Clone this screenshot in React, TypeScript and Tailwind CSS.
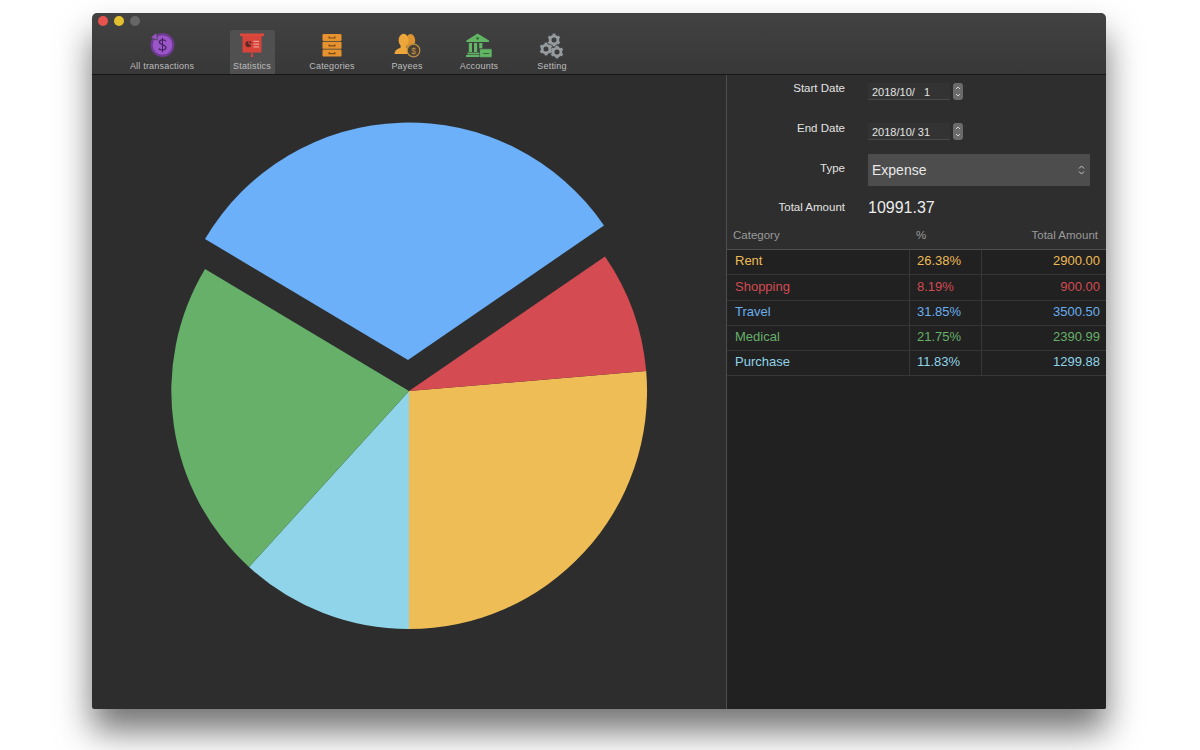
import React from 'react';

const FONT = "font-['Liberation_Sans',Arial,sans-serif]";

// toolbar icons all sit in a 28x28 box
const CoinIcon = () => (
  <svg width="28" height="28" viewBox="0 0 28 28">
    <circle cx="14.5" cy="14" r="12" fill="#6f3a92" />
    <circle cx="14.5" cy="14" r="9.8" fill="#9a55c8" />
    <path d="M2.5 6.5 L8.5 1.8 L9.4 9.2 Z" fill="#9a55c8" stroke="#3d3d3d" strokeWidth="0.7" />
    <path d="M18 10.2 C17 8.6 11.6 8.2 11.4 11 C11.2 14 18 13.4 18 16.6 C18 19.6 12 19.6 10.8 17.6" fill="none" stroke="#43215e" strokeWidth="1.2" />
    <path d="M14.5 6.8 V21.2" stroke="#43215e" strokeWidth="1" />
  </svg>
);

const BoardIcon = () => (
  <svg width="28" height="28" viewBox="0 0 28 28">
    <rect x="2" y="2.5" width="24" height="2.6" fill="#e0483c" />
    <rect x="4.5" y="5" width="19" height="16.5" fill="#d9443a" />
    <rect x="13.3" y="21.5" width="1.4" height="3" fill="#d9443a" />
    <circle cx="14" cy="25" r="1.2" fill="#d9443a" />
    <path d="M10.5 10 A3.1 3.1 0 1 0 13.4 14 L10.5 13 Z" fill="#5e2a28" />
    <path d="M11.6 9.4 L14.2 12 L11.6 12.4 Z" fill="#5e2a28" />
    <rect x="15.4" y="9.8" width="5.6" height="1.1" fill="#f0a49c" />
    <rect x="15.4" y="12.6" width="5.6" height="1.1" fill="#f0a49c" />
    <rect x="15.4" y="15.4" width="5.6" height="1.1" fill="#f0a49c" />
  </svg>
);

const DrawerIcon = () => (
  <svg width="28" height="28" viewBox="0 0 28 28">
    <rect x="4.5" y="3" width="19" height="7" rx="1.2" fill="#e5922f" />
    <rect x="4.5" y="10.8" width="19" height="7" rx="0.6" fill="#e5922f" />
    <rect x="4.5" y="18.6" width="19" height="7" rx="1.2" fill="#e5922f" />
    <path d="M10.5 5.6 h1.4 v0.9 h4.2 v-0.9 h1.4 v2 h-7 Z M10.5 13.4 h1.4 v0.9 h4.2 v-0.9 h1.4 v2 h-7 Z M10.5 21.2 h1.4 v0.9 h4.2 v-0.9 h1.4 v2 h-7 Z" fill="#7c4a16" />
  </svg>
);

const PayeeIcon = () => (
  <svg width="28" height="28" viewBox="0 0 28 28">
    <ellipse cx="17.6" cy="9.5" rx="4.6" ry="6.4" fill="#dd9430" />
    <path d="M14 14 H21 V18 L14 22 Z" fill="#dd9430" />
    <ellipse cx="10.6" cy="9.2" rx="5" ry="6.4" fill="#eda63a" />
    <path d="M7.6 13 H13.6 V16.8 C15.6 17.6 17 18.6 17 20 V23 H1.6 C1.6 19.6 4 18 7.6 16.8 Z" fill="#eda63a" />
    <circle cx="20.5" cy="19.5" r="6.3" fill="#4a4133" stroke="#b98a42" strokeWidth="1.3" />
    <text x="20.5" y="22.6" textAnchor="middle" fontSize="8.5" fill="#c09648" fontFamily="Liberation Sans">$</text>
  </svg>
);

const BankIcon = () => (
  <svg width="28" height="28" viewBox="0 0 28 28">
    <path d="M12.6 2.6 L24 9.4 V11 H1.4 V9.4 Z" fill="#62b565" />
    <circle cx="12.6" cy="7.4" r="1.2" fill="#2e5f32" />
    <rect x="3.8" y="12" width="3.2" height="9" fill="#62b565" />
    <rect x="9" y="12" width="3.2" height="9" fill="#62b565" />
    <rect x="14.2" y="12" width="3.2" height="5.5" fill="#62b565" />
    <rect x="2.4" y="21.6" width="12.4" height="1.8" fill="#62b565" />
    <rect x="1" y="24" width="13.8" height="2" fill="#62b565" />
    <rect x="14.6" y="17.8" width="12.4" height="8.6" rx="1" fill="#62b565" stroke="#3c3c3c" strokeWidth="0.6" />
    <rect x="18" y="22" width="6.4" height="0.9" fill="#2e5f32" />
  </svg>
);

const Gear = ({ x, y }: { x: number; y: number }) => (
  <g transform={`translate(${x} ${y})`}>
    <circle r="3.9" fill="none" stroke="#959b9e" strokeWidth="2.8" />
    {[0, 60, 120, 180, 240, 300].map(a => (
      <rect key={a} x="-1.4" y="-6.4" width="2.8" height="1.8" fill="#959b9e" transform={`rotate(${a})`} />
    ))}
  </g>
);

const GearIcon = () => (
  <svg width="28" height="28" viewBox="0 0 28 28">
    <Gear x={16} y={9} />
    <Gear x={8} y={18} />
    <Gear x={19} y={21} />
  </svg>
);

const toolbarItems = [
  { label: 'All transactions', width: 'w-[90px]', icon: <CoinIcon /> },
  { label: 'Statistics', width: 'w-[90px]', icon: <BoardIcon />, active: true },
  { label: 'Categories', width: 'w-[70px]', icon: <DrawerIcon /> },
  { label: 'Payees', width: 'w-[80px]', icon: <PayeeIcon /> },
  { label: 'Accounts', width: 'w-[64px]', icon: <BankIcon /> },
  { label: 'Setting', width: 'w-[82px]', icon: <GearIcon /> },
];

const rows = [
  { name: 'Rent', pct: '26.38%', amount: '2900.00', color: 'text-[#edbb55]' },
  { name: 'Shopping', pct: '8.19%', amount: '900.00', color: 'text-[#d24b52]' },
  { name: 'Travel', pct: '31.85%', amount: '3500.50', color: 'text-[#6aaeee]' },
  { name: 'Medical', pct: '21.75%', amount: '2390.99', color: 'text-[#66b06a]' },
  { name: 'Purchase', pct: '11.83%', amount: '1299.88', color: 'text-[#8fd4e8]' },
];

const Stepper = () => (
  <div className="w-[10px] h-[17px] rounded-[3px] bg-[#6b6b6b] flex items-center justify-center">
    <svg width="6" height="13" viewBox="0 0 6 13" fill="none" stroke="#d8d8d8" strokeWidth="0.9">
      <path d="M1 4 L3 2 L5 4" />
      <path d="M1 9 L3 11 L5 9" />
    </svg>
  </div>
);

const DateField = ({ value }: { value: string }) => (
  <div className="flex items-center gap-[3px]">
    <div className="w-[82px] h-[17px] border-b border-[#484848] bg-[#333333] pl-[4px] text-[11px] leading-[18px] text-[#e4e4e4] whitespace-pre">
      {value}
    </div>
    <Stepper />
  </div>
);

const Label = ({ children }: { children: React.ReactNode }) => (
  <div className="w-[118px] shrink-0 -mt-[1px] text-right text-[11.5px] leading-[13px] text-[#e2e2e2] mr-[23px]">{children}</div>
);

export default function App() {
  return (
    <div className={`h-[750px] overflow-hidden bg-white pt-[13px] pl-[92px] ${FONT}`}>
      <div className="w-[1014px] h-[696px] flex flex-col rounded-t-[5px] rounded-b-[2px] overflow-hidden shadow-[0_22px_34px_rgba(0,0,0,0.55)]">
        <div className="h-[62px] shrink-0 relative bg-gradient-to-b from-[#424242] to-[#383838] border-b border-[#161616]">
          <div className="absolute left-[6px] top-[3px] flex gap-[6px]">
            <span className="w-[10px] h-[10px] rounded-full bg-[#e8524f]" />
            <span className="w-[10px] h-[10px] rounded-full bg-[#e5c02e]" />
            <span className="w-[10px] h-[10px] rounded-full bg-[#666666]" />
          </div>
          <div className="flex pl-[25px] pt-[17px]">
            {toolbarItems.map(item => (
              <div key={item.label} className={`${item.width} flex justify-center`}>
                <div className={`min-w-[45px] h-[44px] pt-[1px] flex flex-col items-center rounded-t-[3px] ${item.active ? 'bg-[#505050]' : ''}`}>
                  <div className="h-[28px] flex items-center justify-center">{item.icon}</div>
                  <div className="text-[9px] leading-[11px] mt-[2px] text-[#bdbdbd] whitespace-nowrap tracking-[0.2px]">{item.label}</div>
                </div>
              </div>
            ))}
          </div>
        </div>

        <div className="flex-1 flex min-h-0">
          <div className="w-[634px] shrink-0 bg-[#2d2d2d] flex items-center justify-center">
            <svg width="500" height="540" viewBox="-250 -269 500 540">
              <path d="M0 0 L237.2 -20 A238 238 0 0 1 0 238 Z" fill="#eebd55" />
              <path d="M0 0 L0 238 A238 238 0 0 1 -160 176 Z" fill="#8fd4e8" />
              <path d="M0 0 L-160 176 A238 238 0 0 1 -204 -122 Z" fill="#66b06a" />
              <path d="M0 0 L196 -134.5 A238 238 0 0 1 237.2 -20 Z" fill="#d44b52" />
              <path d="M-1 -31 L-204 -152 A236.5 236.5 0 0 1 195 -165.5 Z" fill="#6bb0f8" />
            </svg>
          </div>

          <div className="flex-1 flex flex-col border-l border-[#4d4d4d] bg-[#2e2e2e] min-w-0">
            <div className="pt-[8px]">
              <div className="flex items-start h-[17px]">
                <Label>Start Date</Label>
                <DateField value="2018/10/   1" />
              </div>
              <div className="flex items-start h-[17px] mt-[23px]">
                <Label>End Date</Label>
                <DateField value="2018/10/ 31" />
              </div>
              <div className="flex items-start h-[32px] mt-[14px]">
                <div className="pt-[9px]">
                  <Label>Type</Label>
                </div>
                <div className="w-[222px] h-[32px] bg-[#4d4d4d] rounded-[1px] flex items-center justify-between pl-[4px] pr-[5px] text-[14px] text-[#e8e8e8]">
                  <span>Expense</span>
                  <svg width="7" height="12" viewBox="0 0 7 12" fill="none" stroke="#c8c8c8" strokeWidth="1">
                    <path d="M1 4.5 L3.5 2 L6 4.5" />
                    <path d="M1 7.5 L3.5 10 L6 7.5" />
                  </svg>
                </div>
              </div>
              <div className="flex items-center h-[20px] mt-[12px]">
                <Label>Total Amount</Label>
                <div className="text-[16px] text-[#ececec]">10991.37</div>
              </div>
            </div>

            <div className="flex items-start justify-between h-[24px] mt-[8px] pl-[6px] pr-[8px] pt-[3px] border-b border-[#4f4f4f] text-[11.5px] leading-[13px] text-[#9a9a9a]">
              <div className="w-[183px]">Category</div>
              <div className="flex-1">%</div>
              <div>Total Amount</div>
            </div>

            <div className="flex-1 bg-[#212121]">
              {rows.map(row => (
                <div key={row.name} className={`flex h-[25.25px] items-center border-b border-[#363636] text-[13px] ${row.color}`}>
                  <div className="w-[183px] h-full flex items-center pl-[8px] pb-[2px] border-r border-[#363636]">{row.name}</div>
                  <div className="w-[72px] h-full flex items-center pl-[7px] pb-[2px] border-r border-[#363636]">{row.pct}</div>
                  <div className="flex-1 text-right pr-[6px] pb-[2px]">{row.amount}</div>
                </div>
              ))}
            </div>
          </div>
        </div>
      </div>
    </div>
  );
}
